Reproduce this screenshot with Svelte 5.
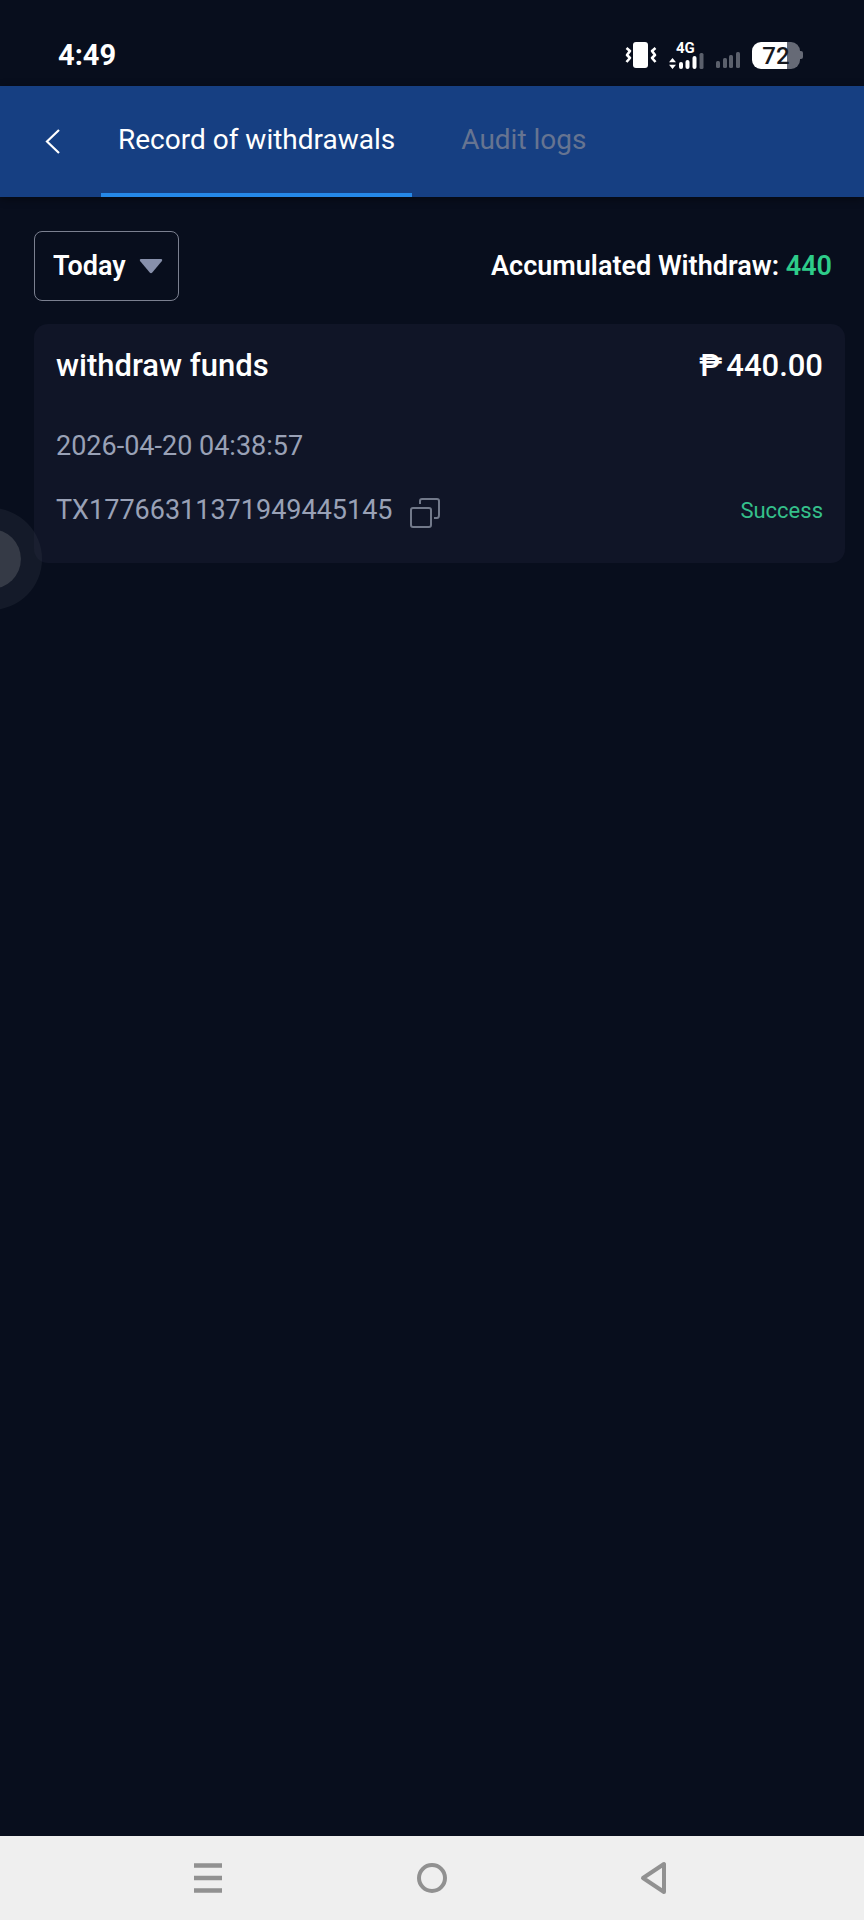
<script>
  let tabs = ["Record of withdrawals", "Audit logs"];
  let active = 0;
  let range = "Today";

  let records = [
    {
      title: "withdraw funds",
      amount: 440,
      date: "2026-04-20 04:38:57",
      id: "TX17766311371949445145",
      status: "Success",
    },
  ];

  $: total = records.reduce((sum, r) => sum + r.amount, 0);

  function copyId(id) {
    navigator.clipboard?.writeText(id);
  }
</script>

<div class="screen">
  <div class="status">
    <span class="clock">4:49</span>
    <div class="indicators">
      <svg width="32" height="28" viewBox="0 0 32 28">
        <rect x="8" y="1" width="15" height="26" rx="3" fill="#fff" />
        <path
          d="M1.500 7l3.500 3-3 4 3 3-3.500 4M30.500 7l-3.500 3 3 4-3 3 3.500 4"
          fill="none"
          stroke="#fff"
          stroke-width="2.6"
          stroke-linejoin="round"
        />
      </svg>
      <div class="mobile">
        <span>4G</span>
        <svg width="36" height="18" viewBox="0 0 36 18">
          <path d="M4.500 6l3.500 4.300H1zM4.500 17l3.500-4.300H1z" fill="#fff" />
          <rect x="11" y="10" width="4" height="7" rx="2" fill="#fff" />
          <rect x="17.500" y="8" width="4" height="9" rx="2" fill="#fff" />
          <rect x="24.500" y="4" width="4" height="13" rx="2" fill="#fff" />
          <rect x="31.500" y="1" width="4" height="16" rx="1.500" fill="#5b606c" />
        </svg>
      </div>
      <svg width="26" height="28" viewBox="0 0 26 28">
        <g fill="#5b606c">
          <rect x="1" y="20" width="4" height="7" rx="1.500" />
          <rect x="8" y="17" width="4" height="10" rx="1.500" />
          <rect x="14" y="14" width="4" height="13" rx="1.500" />
          <rect x="21" y="11" width="4" height="16" rx="1.500" />
        </g>
      </svg>
      <div class="battery"><span>72</span></div>
    </div>
  </div>

  <header>
    <button class="back" aria-label="Back">
      <svg width="18" height="28" viewBox="0 0 18 28">
        <path d="M15 2L3 13.500 15 25" fill="none" stroke="#fff" stroke-width="2.200" />
      </svg>
    </button>
    <nav>
      {#each tabs as tab, i}
        <button
          class="tab {active == i ? 'active' : ''}"
          on:click={() => {
            active = i;
          }}>{tab}</button
        >
      {/each}
    </nav>
  </header>

  <main>
    <div class="filters">
      <div class="range">
        <select bind:value={range} aria-label="Date range">
          <option>Today</option>
          <option>Yesterday</option>
        </select>
        <svg width="24" height="16" viewBox="0 0 24 16">
          <path
            d="M2 1h20q2 .6.700 2.300L13.300 14.500q-1.300 1.300-2.600 0L1.300 3.300Q0 1.600 2 1z"
            fill="#8790ab"
          />
        </svg>
      </div>
      <div class="total">Accumulated Withdraw: <span>{total}</span></div>
    </div>

    {#each records as record}
      <article class="card">
        <div class="row head">
          <h2>{record.title}</h2>
          <div class="amount"><span>₱</span><span>{record.amount.toFixed(2)}</span></div>
        </div>
        <time>{record.date}</time>
        <div class="row">
          <div class="txid">
            <span>{record.id}</span>
            <button aria-label="Copy" on:click={() => copyId(record.id)}>
              <svg width="32" height="32" viewBox="0 0 32 32">
                <g fill="none" stroke="#72798a" stroke-width="2">
                  <rect x="1" y="10" width="20" height="19" rx="2" />
                  <path d="M10 6V3q0-2 2-2h15q2 0 2 2v14q0 3-2 3h-3" />
                </g>
              </svg>
            </button>
          </div>
          <span class="state">{record.status}</span>
        </div>
      </article>
    {/each}
  </main>

  <button class="floating" aria-label="Quick menu"></button>

  <footer>
    <button aria-label="Recent apps">
      <svg width="32" height="36" viewBox="0 0 32 36">
        <path d="M2 5.500h28M2 18h28M2 30.500h28" stroke="#919191" stroke-width="4.500" />
      </svg>
    </button>
    <button aria-label="Home">
      <svg width="32" height="36" viewBox="0 0 32 36">
        <circle cx="16" cy="18" r="13" fill="none" stroke="#919191" stroke-width="4" />
      </svg>
    </button>
    <button aria-label="Back">
      <svg width="32" height="36" viewBox="0 0 32 36">
        <path
          d="M24 4v28L3 18z"
          fill="none"
          stroke="#919191"
          stroke-width="4"
          stroke-linejoin="round"
        />
      </svg>
    </button>
  </footer>
</div>

<style>
  :global(body) {
    margin: 0;
    background: #080e1d;
  }
  .screen {
    position: relative;
    display: flex;
    flex-direction: column;
    min-height: 100vh;
    overflow: hidden;
    color: #fff;
    font-family: Roboto, sans-serif;
  }
  button,
  select {
    margin: 0;
    padding: 0;
    border: 0;
    background: none;
    color: inherit;
    font: inherit;
    cursor: pointer;
  }
  svg {
    display: block;
  }

  .status {
    display: flex;
    align-items: center;
    justify-content: space-between;
    height: 62px;
    padding: 24px 61px 0 58px;
  }
  .clock {
    font-size: 29px;
    font-weight: 700;
  }
  .indicators {
    display: flex;
    align-items: center;
    gap: 11px;
  }
  .mobile span {
    display: block;
    height: 12px;
    padding-left: 8px;
    font-size: 15px;
    font-weight: 700;
    line-height: 16px;
  }
  .battery {
    position: relative;
    width: 48px;
    height: 27px;
    margin-right: 3px;
    border-radius: 9px;
    background: linear-gradient(to right, #fff 35px, #666a76 35px);
    color: #17191f;
    font-size: 24px;
    font-weight: 500;
    line-height: 28px;
    text-align: center;
  }
  .battery::after {
    content: "";
    position: absolute;
    top: 9px;
    right: -3px;
    width: 3px;
    height: 8px;
    border-radius: 0 2px 2px 0;
    background: #666a76;
  }

  header {
    display: flex;
    height: 111px;
    background: #163f82;
    box-shadow: 0 2px 8px rgba(0, 0, 0, 0.4);
  }
  .back {
    display: flex;
    align-items: center;
    justify-content: flex-end;
    width: 62px;
    margin-right: 39px;
  }
  nav {
    display: flex;
    gap: 32px;
  }
  .tab {
    padding: 0 17px;
    border-bottom: 4px solid transparent;
    color: #667491;
    font-size: 28px;
  }
  .tab.active {
    border-bottom-color: #2588e8;
    color: #fff;
  }

  main {
    flex: 1;
    padding: 34px 19px 0 34px;
  }
  .filters {
    display: flex;
    align-items: center;
    justify-content: space-between;
    padding-right: 13px;
    margin-bottom: 23px;
    font-size: 27px;
    font-weight: 600;
  }
  .range {
    position: relative;
  }
  .range select {
    box-sizing: border-box;
    width: 145px;
    height: 70px;
    padding: 0 40px 0 18px;
    border: 1px solid #7b8090;
    border-radius: 8px;
    appearance: none;
  }
  .range option {
    background: #101527;
  }
  .range svg {
    position: absolute;
    top: 27px;
    right: 16px;
    pointer-events: none;
  }
  .total span {
    color: #2ecc8a;
  }

  .card {
    padding: 22px 22px 33px;
    border-radius: 14px;
    background: #101527;
    color: #99a1b6;
    font-size: 27px;
  }
  .row {
    display: flex;
    align-items: center;
    justify-content: space-between;
  }
  .head {
    color: #fff;
    font-size: 31px;
    font-weight: 500;
    line-height: 40px;
  }
  h2 {
    margin: 0;
    font: inherit;
  }
  .amount {
    display: flex;
    gap: 4px;
  }
  time {
    display: block;
    margin: 43px 0 27px;
    line-height: 34px;
  }
  .txid {
    display: flex;
    align-items: flex-end;
    gap: 17px;
    line-height: 40px;
  }
  .state {
    color: #35c08b;
    font-size: 22px;
  }

  /* assistive handle that peeks in from the left edge */
  .floating {
    position: absolute;
    top: 508px;
    left: -60px;
    width: 102px;
    height: 102px;
    border: 21px solid rgba(50, 55, 68, 0.3);
    border-radius: 50%;
    background: #353a46;
    background-clip: padding-box;
  }

  footer {
    display: flex;
    align-items: center;
    justify-content: space-around;
    height: 84px;
    padding: 0 96px;
    background: #efefef;
  }
</style>
